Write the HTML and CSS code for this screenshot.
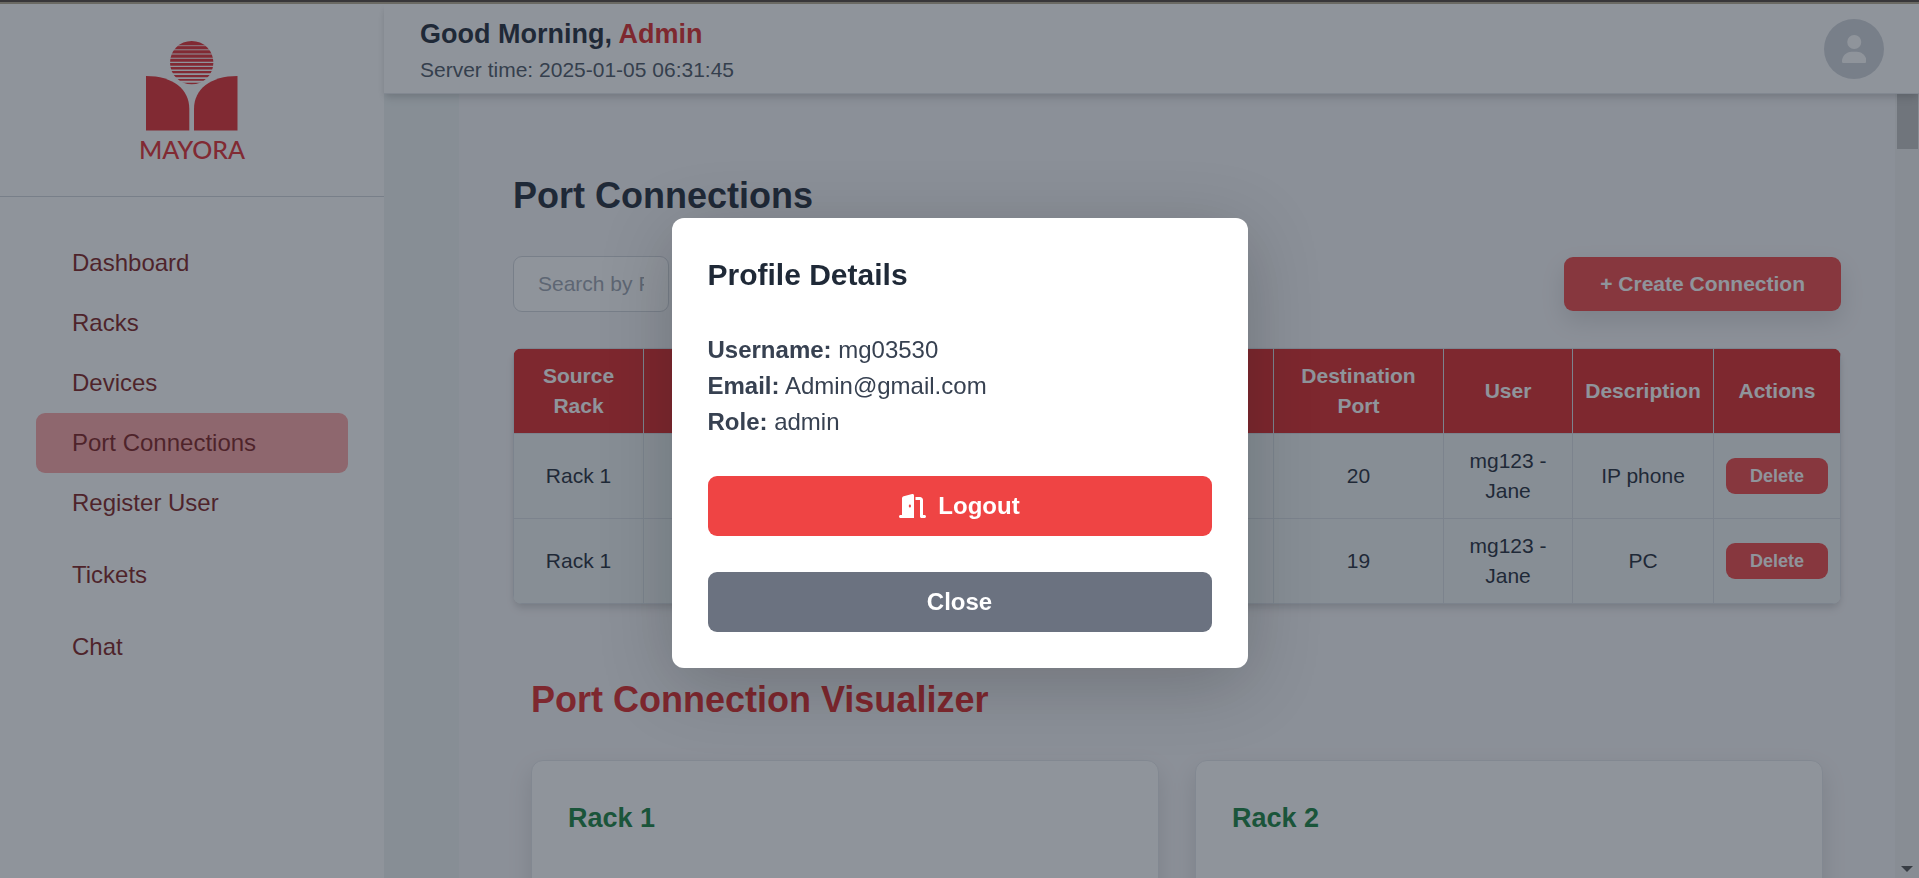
FILE: index.html
```html
<!DOCTYPE html>
<html lang="en">
<head>
  <meta charset="utf-8">
  <meta name="viewport" content="width=device-width, initial-scale=1">
  <title>Port Connections</title>
  <link rel="stylesheet" href="styles.css">
</head>
<body>
  <div class="top-edge"></div>
  <div class="app">
    <aside class="sidebar">
      <div class="brand">
        <svg class="brand-logo" viewBox="0 0 110 120" role="img" aria-label="Mayora">
          <circle class="logo-fill" cx="54.7" cy="22.6" r="21.7"/>
          <g class="logo-lines">
            <path stroke-width="0.8" d="M32 5.7h46"/>
            <path stroke-width="0.9" d="M32 9.8h46"/>
            <path stroke-width="1" d="M32 14h46"/>
            <path stroke-width="1.1" d="M32 18.3h46"/>
            <path stroke-width="1.3" d="M32 22.4h46"/>
            <path stroke-width="1.4" d="M32 26.4h46"/>
            <path stroke-width="1.5" d="M32 30.3h46"/>
            <path stroke-width="1.7" d="M32 34.2h46"/>
            <path stroke-width="1.9" d="M32 38.1h46"/>
            <path stroke-width="2.1" d="M32 41.8h46"/>
          </g>
          <path class="logo-fill" d="M9 36C36 36 52.300 49 52.300 69V90.500H9z"/>
          <path class="logo-fill" d="M100.500 36C73.500 36 57 49 57 69V90.500H100.500z"/>
          <text class="logo-text" x="55" y="119" text-anchor="middle">MAYORA</text>
        </svg>
      </div>
      <nav class="nav">
        <div class="nav-group">
          <a class="nav-link" href="#">Dashboard</a>
          <a class="nav-link" href="#">Racks</a>
          <a class="nav-link" href="#">Devices</a>
          <a class="nav-link nav-link-active" href="#" aria-current="page">Port Connections</a>
          <a class="nav-link" href="#">Register User</a>
        </div>
        <a class="nav-link" href="#">Tickets</a>
        <a class="nav-link" href="#">Chat</a>
      </nav>
    </aside>

    <div class="workspace">
      <header class="header">
        <div>
          <p class="greeting">Good Morning, <span class="greeting-name">Admin</span></p>
          <p class="server-time">Server time: 2025-01-05 06:31:45</p>
        </div>
        <button class="avatar" type="button" aria-label="Profile">
          <svg class="avatar-icon" viewBox="0 0 448 512" aria-hidden="true"><path d="M224 256A128 128 0 1 0 224 0a128 128 0 1 0 0 256zm-45.700 48C79.800 304 0 383.800 0 482.300C0 498.700 13.300 512 29.700 512l388.600 0c16.400 0 29.700-13.300 29.700-29.700C448 383.800 368.200 304 269.700 304l-91.400 0z"/></svg>
        </button>
      </header>

      <div class="scroll-area">
        <main class="content">
          <h1 class="title">Port Connections</h1>
          <div class="toolbar">
            <input class="search" type="text" placeholder="Search by Port or Rack" aria-label="Search connections">
            <button class="create" type="button">+ Create Connection</button>
          </div>

          <div class="table-card">
            <table class="table">
              <colgroup>
                <col class="col-rack"><col class="col-route"><col class="col-dest"><col class="col-user"><col class="col-desc"><col class="col-actions">
              </colgroup>
              <thead>
                <tr><th>Source Rack</th><th></th><th>Destination Port</th><th>User</th><th>Description</th><th>Actions</th></tr>
              </thead>
              <tbody>
                <tr><td>Rack 1</td><td></td><td>20</td><td>mg123 - Jane</td><td>IP phone</td><td><button class="delete" type="button">Delete</button></td></tr>
                <tr><td>Rack 1</td><td></td><td>19</td><td>mg123 - Jane</td><td>PC</td><td><button class="delete" type="button">Delete</button></td></tr>
              </tbody>
            </table>
          </div>

          <section class="visualizer">
            <h2 class="visualizer-title">Port Connection Visualizer</h2>
            <div class="racks">
              <article class="rack"><h3 class="rack-title">Rack 1</h3></article>
              <article class="rack"><h3 class="rack-title">Rack 2</h3></article>
            </div>
          </section>
        </main>
        <div class="scrollbar" aria-hidden="true">
          <div class="scrollbar-thumb"></div>
          <svg class="scrollbar-arrow" viewBox="0 0 12 6"><path d="M0 0h12L6 6z"/></svg>
        </div>
      </div>
    </div>
  </div>

  <div class="overlay">
    <div class="modal" role="dialog" aria-modal="true" aria-labelledby="profile-title">
      <h2 class="modal-title" id="profile-title">Profile Details</h2>
      <div class="details">
        <p><strong>Username:</strong> mg03530</p>
        <p><strong>Email:</strong> Admin@gmail.com</p>
        <p><strong>Role:</strong> admin</p>
      </div>
      <button class="modal-button logout" type="button">
        <svg class="door-icon" viewBox="0 0 576 512" aria-hidden="true"><path d="M320 32c0-9.900-4.500-19.200-12.300-25.200S289.800-1.400 280.200 1l-179.900 45C79 51.300 64 70.500 64 92.500L64 448l-32 0c-17.700 0-32 14.300-32 32s14.300 32 32 32l64 0 192 0 32 0 0-32 0-448zM256 256c0 17.700-10.700 32-24 32s-24-14.300-24-32s10.700-32 24-32s24 14.300 24 32zm96-128l96 0 0 352c0 17.700 14.300 32 32 32l64 0c17.700 0 32-14.300 32-32s-14.300-32-32-32l-32 0 0-320c0-35.300-28.700-64-64-64l-96 0 0 64z"/></svg>
        Logout
      </button>
      <button class="modal-button close" type="button">Close</button>
    </div>
  </div>
</body>
</html>
```

FILE: styles.css
```css
*,
*::before,
*::after {
  box-sizing: border-box;
}

body,
h1,
h2,
h3,
p {
  margin: 0;
}

body {
  display: flex;
  flex-direction: column;
  height: 100vh;
  overflow: hidden;
  background: #eef3f3;
  color: #1f2937;
  font-family: "Liberation Sans", Arial, sans-serif;
  font-size: 24px;
  line-height: 36px;
}

button,
input {
  font-family: inherit;
}

button {
  border: 0;
  cursor: pointer;
}

/* Window edge */
.top-edge {
  position: relative;
  z-index: 20;
  flex: none;
  height: 4px;
  border-top: 2px solid #38373a;
  background: #6a6963;
}

.app {
  display: flex;
  flex: 1;
  min-height: 0;
}

/* Sidebar */
.sidebar {
  flex: none;
  width: 384px;
  background: #ffffff;
}

.brand {
  display: flex;
  justify-content: center;
  padding: 36px;
  border-bottom: 1px solid #d1d5db;
}

.brand-logo {
  width: 110px;
  height: 120px;
  overflow: visible;
}

.logo-fill {
  fill: #e32a2e;
}

.logo-lines {
  stroke: #ffffff;
}

.logo-text {
  fill: #e32a2e;
  font-family: Lato, sans-serif;
  font-size: 25px;
  font-weight: 500;
}

.nav {
  display: flex;
  flex-direction: column;
  gap: 12px;
  padding: 36px;
}

.nav-link {
  display: block;
  padding: 12px 36px;
  border-radius: 9px;
  color: #7f1d1d;
  text-decoration: none;
}

.nav-link-active {
  background: #fca5a5;
}

/* Header */
.workspace {
  display: flex;
  flex: 1;
  flex-direction: column;
  min-width: 0;
}

.header {
  position: relative;
  z-index: 2;
  display: flex;
  flex: none;
  align-items: center;
  justify-content: space-between;
  padding: 9px 35px 8px 36px;
  border-bottom: 1px solid #e5e7eb;
  background: #ffffff;
  box-shadow: 0 6px 9px -1px rgba(0, 0, 0, 0.1), 0 3px 6px -1px rgba(0, 0, 0, 0.1);
}

.greeting {
  font-size: 27px;
  font-weight: 700;
  line-height: 42px;
}

.greeting-name {
  color: #dc2626;
}

.server-time {
  color: #4b5563;
  font-size: 21px;
  line-height: 30px;
}

.avatar {
  display: flex;
  align-items: center;
  justify-content: center;
  width: 60px;
  height: 60px;
  padding: 0;
  border-radius: 50%;
  background: #d1d5db;
}

.avatar-icon {
  height: 28px;
  fill: #ffffff;
}

/* Page content */
.scroll-area {
  display: flex;
  flex: 1;
  min-height: 0;
  padding-left: 75px;
}

.content {
  flex: 1;
  min-width: 0;
  padding: 78px 54px 0;
  overflow: hidden;
  background: #f7f6f8;
}

.title,
.visualizer-title {
  margin-bottom: 36px;
  font-size: 36px;
  line-height: 48px;
}

.toolbar {
  display: flex;
  align-items: center;
  justify-content: space-between;
  margin-bottom: 36px;
}

.search {
  width: 156px;
  height: 56px;
  padding: 12px 24px;
  border: 1px solid #d1d5db;
  border-radius: 9px;
  background: #ffffff;
  font-size: 21px;
}

.search::placeholder {
  color: #9ca3af;
}

.create {
  padding: 12px 36px;
  border-radius: 9px;
  background: #ef4444;
  box-shadow: 0 10px 24px rgba(0, 0, 0, 0.12);
  color: #ffffff;
  font-size: 21px;
  font-weight: 700;
  line-height: 30px;
}

/* Connections table */
.table-card {
  overflow: hidden;
  border-radius: 9px;
  box-shadow: 0 6px 9px -1px rgba(0, 0, 0, 0.1), 0 3px 6px -1px rgba(0, 0, 0, 0.08);
}

.table {
  width: 100%;
  border-collapse: collapse;
  table-layout: fixed;
  background: #eef3f3;
  font-size: 21px;
  line-height: 30px;
  text-align: center;
}

.table th,
.table td {
  padding: 12px;
  border: 1px solid #d8dde3;
}

.table th {
  background: #dc2626;
  color: #ffffff;
}

.col-rack {
  width: 130px;
}

.col-dest {
  width: 170px;
}

.col-user {
  width: 129px;
}

.col-desc {
  width: 141px;
}

.col-actions {
  width: 127px;
}

.delete {
  padding: 6px 24px;
  border-radius: 9px;
  background: #ef4444;
  color: #ffffff;
  font-size: 18px;
  font-weight: 700;
  line-height: 24px;
  vertical-align: middle;
}

/* Rack visualizer */
.visualizer {
  padding: 72px 18px 0;
}

.visualizer-title {
  color: #dc2626;
}

.racks {
  display: grid;
  grid-template-columns: 1fr 1fr;
  gap: 36px;
}

.rack {
  min-height: 240px;
  padding: 36px;
  border: 1px solid #e5e7eb;
  border-radius: 12px;
  background: #ffffff;
  box-shadow: 0 10px 24px rgba(0, 0, 0, 0.12);
}

.rack-title {
  color: #15803d;
  font-size: 27px;
  line-height: 42px;
}

/* Scrollbar */
.scrollbar {
  display: flex;
  flex: none;
  flex-direction: column;
  align-items: center;
  justify-content: space-between;
  width: 24px;
  padding-bottom: 6px;
  background: #f1f1f1;
}

.scrollbar-thumb {
  width: 21px;
  height: 55px;
  background: #c1c1c1;
}

.scrollbar-arrow {
  width: 12px;
  height: 6px;
  fill: #505050;
}

/* Profile dialog */
.overlay {
  position: fixed;
  inset: 0;
  z-index: 10;
  display: flex;
  align-items: center;
  justify-content: center;
  padding-top: 8px;
  background: rgba(31, 41, 55, 0.5);
}

.modal {
  display: flex;
  flex-direction: column;
  gap: 36px;
  width: 576px;
  padding: 36px;
  border-radius: 12px;
  background: #ffffff;
  box-shadow: 0 15px 75px rgba(0, 0, 0, 0.2);
}

.modal-title {
  font-size: 30px;
  line-height: 42px;
}

.details {
  color: #374151;
}

.modal-button {
  display: flex;
  align-items: center;
  justify-content: center;
  gap: 12px;
  padding: 12px 24px;
  border-radius: 9px;
  color: #ffffff;
  font-size: 24px;
  font-weight: 700;
  line-height: 36px;
}

.logout {
  background: #ef4444;
}

.close {
  background: #6b7280;
}

.door-icon {
  width: 27px;
  height: 24px;
  fill: currentColor;
}
```
